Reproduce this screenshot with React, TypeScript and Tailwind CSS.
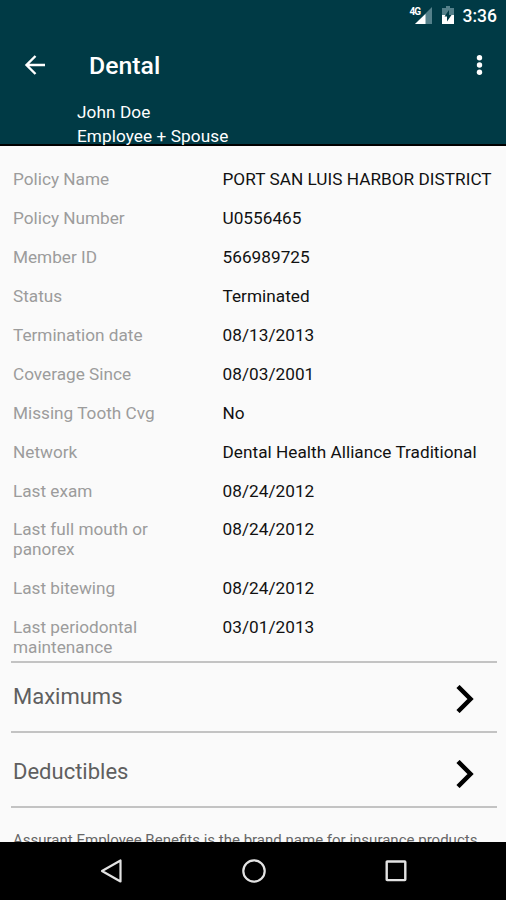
import { ReactNode } from "react";

const details = [
  { label: "Policy Name", value: "PORT SAN LUIS HARBOR DISTRICT" },
  { label: "Policy Number", value: "U0556465" },
  { label: "Member ID", value: "566989725" },
  { label: "Status", value: "Terminated" },
  { label: "Termination date", value: "08/13/2013" },
  { label: "Coverage Since", value: "08/03/2001" },
  { label: "Missing Tooth Cvg", value: "No" },
  { label: "Network", value: "Dental Health Alliance Traditional" },
  { label: "Last exam", value: "08/24/2012" },
  { label: "Last full mouth or panorex", value: "08/24/2012" },
  { label: "Last bitewing", value: "08/24/2012" },
  { label: "Last periodontal maintenance", value: "03/01/2013" },
];

function StatusBar() {
  return (
    <div className="flex h-[30px] items-center justify-end pt-[2px] pr-[9px] text-white">
      <svg width="24" height="20" viewBox="0 0 24 20" className="mr-[8px]">
        <path d="M23 1v17H6z" fill="#54808a" />
        <path d="M16.500 8v10H6z" fill="#fff" />
        <text x="0.500" y="9" fontSize="10" fontWeight="700" fill="#fff" textLength="11.500">
          4G
        </text>
      </svg>
      <svg width="14" height="20" viewBox="0 0 14 20" className="mr-[8px]">
        <path d="M5 0h4v2h4v7H1V2h4z" fill="#54808a" />
        <path d="M1 9h12v9H1z" fill="#fff" />
        <path d="M8 4 3.500 10.500H6V15.500l4.500-6.500H8z" fill="#003a45" />
      </svg>
      <span className="text-[17.500px] leading-5 font-medium">3:36</span>
    </div>
  );
}

function Header() {
  return (
    <header className="h-[146px] shrink-0 border-b-2 border-black bg-[#003a45] text-white">
      <StatusBar />
      <div className="flex h-[69px] items-center pr-[23px] pl-[24px]">
        <svg width="22" height="20" viewBox="0 0 22 20" fill="none" stroke="#fff" strokeWidth="2.400">
          <path d="M21 10H3M11.500 1 2.500 10l9 9" />
        </svg>
        <h1 className="mt-[2px] ml-[43px] flex-1 text-[24.800px] leading-8 font-medium">Dental</h1>
        <svg width="7" height="20" viewBox="0 0 7 20" fill="#fff">
          <circle cx="3.500" cy="2.800" r="2.700" />
          <circle cx="3.500" cy="10" r="2.700" />
          <circle cx="3.500" cy="17.200" r="2.700" />
        </svg>
      </div>
      <div className="pt-px pl-[77px] text-[17.200px] leading-6 tracking-[0.080px]">
        <p>John Doe</p>
        <p>Employee + Spouse</p>
      </div>
    </header>
  );
}

function SectionLink({ children, className }: { children: ReactNode; className: string }) {
  return (
    <div className={`mr-[9px] ml-[11px] flex justify-between border-b-2 border-[#c3c3c3] pr-[23px] pl-[2px] ${className}`}>
      <span className="text-[22px] leading-7 text-[#5f5f5f]">{children}</span>
      <svg width="18" height="28" viewBox="0 0 18 28" fill="none" stroke="#000" strokeWidth="4.500" className="mt-[2px]">
        <path d="M2 1.500 14.500 14 2 26.500" />
      </svg>
    </div>
  );
}

function NavBar() {
  return (
    <nav className="flex h-[58px] shrink-0 items-center justify-between bg-black pr-[99px] pl-[100px]">
      <svg width="24" height="26" viewBox="0 0 24 26" fill="none" stroke="#e3e3e3" strokeWidth="2.200" strokeLinejoin="round">
        <path d="M20.500 2.500v21L2 13z" />
      </svg>
      <svg width="26" height="26" viewBox="0 0 26 26" fill="none" stroke="#e3e3e3" strokeWidth="2.200">
        <circle cx="12" cy="13" r="10.700" />
      </svg>
      <svg width="22" height="22" viewBox="0 0 22 22" fill="none" stroke="#e3e3e3" strokeWidth="2.400">
        <rect x="1.700" y="1.500" width="18.600" height="18.600" rx="0.500" />
      </svg>
    </nav>
  );
}

export default function App() {
  return (
    <div className="flex h-[900px] w-[506px] flex-col overflow-hidden bg-[#fafafa] font-['Roboto',sans-serif]">
      <Header />
      <main className="min-h-0 flex-1 overflow-hidden">
        <dl className="mr-[9px] ml-[11px] flex h-[517px] flex-col gap-[18.940px] border-b-2 border-[#c3c3c3] pt-[23px] pl-[2px]">
          {details.map((d) => (
            <div key={d.label} className="flex text-[17.200px] leading-5">
              <dt className="w-[209.500px] shrink-0 pr-[50px] text-[#9c9c9c]">{d.label}</dt>
              <dd className="tracking-[0.030px] whitespace-nowrap text-[#111]">{d.value}</dd>
            </div>
          ))}
        </dl>
        <SectionLink className="h-[70px] pt-[20px]">Maximums</SectionLink>
        <SectionLink className="h-[75px] pt-[25px]">Deductibles</SectionLink>
        <p className="mt-[22px] ml-[13px] text-[15.030px] leading-5 whitespace-nowrap text-[#666]">
          Assurant Employee Benefits is the brand name for insurance products
        </p>
      </main>
      <NavBar />
    </div>
  );
}
